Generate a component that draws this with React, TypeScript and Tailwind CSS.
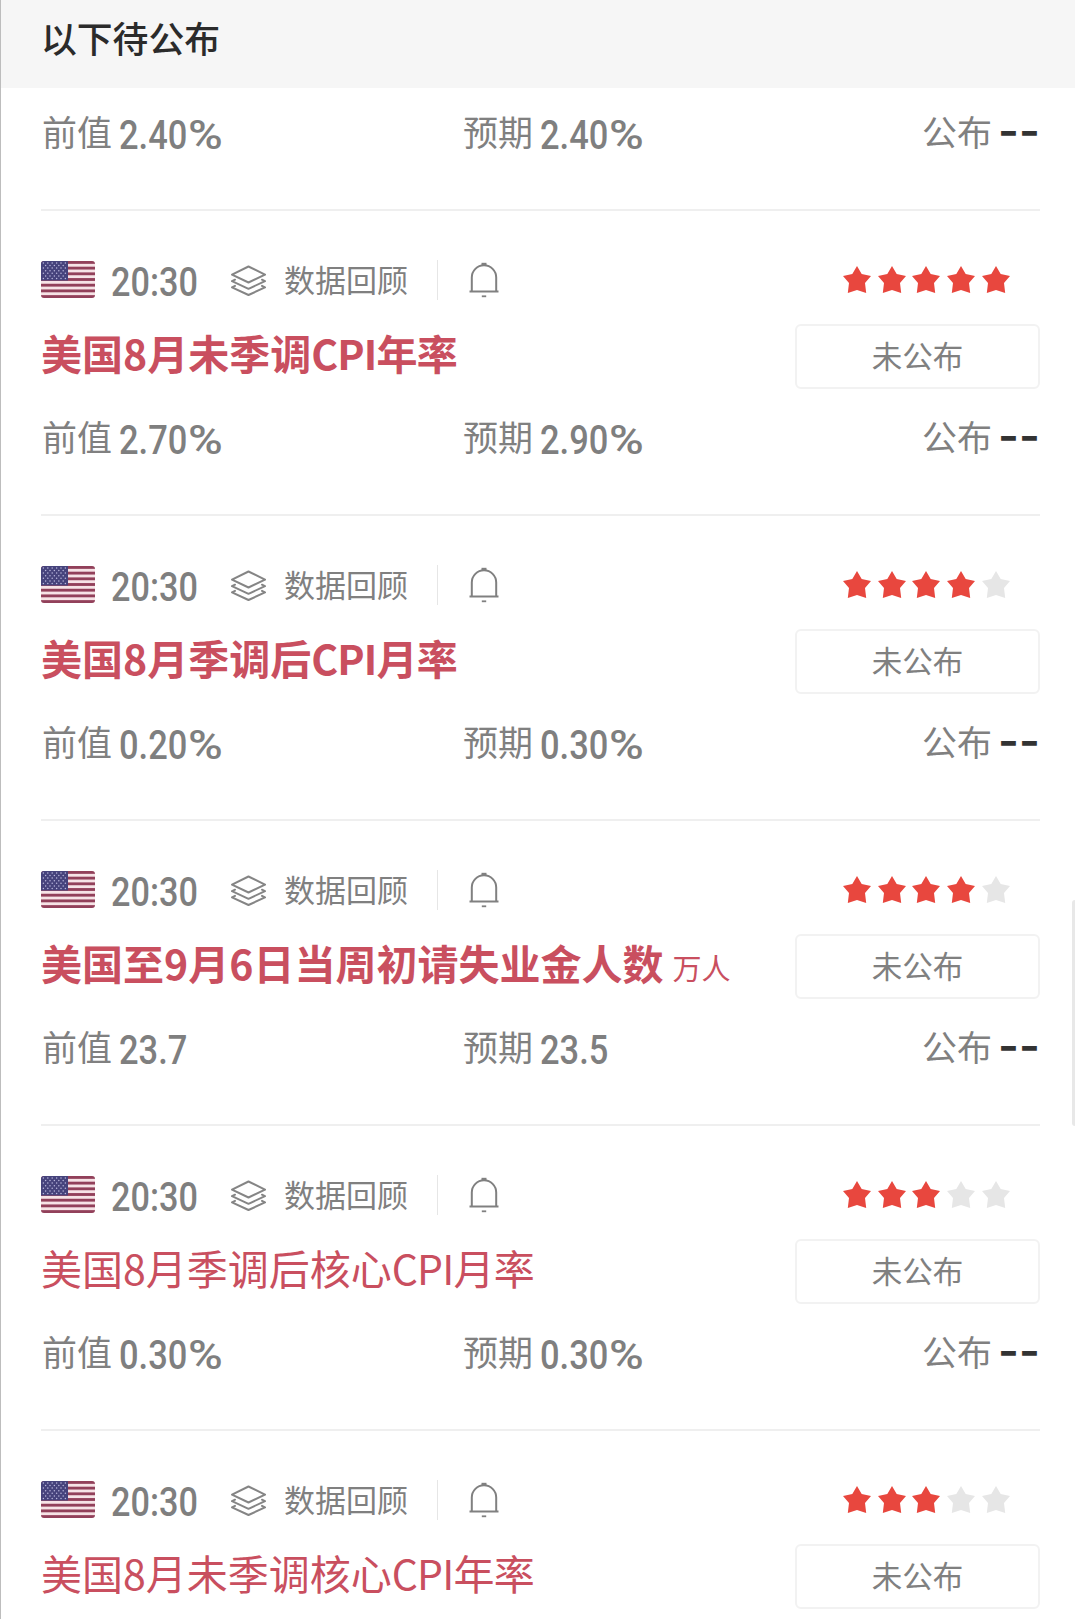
import React from 'react';
import clsx from 'clsx';

interface CalendarEvent {
  id: number;
  time: string;
  title: string;
  unit?: string;
  stars: number;
  previous?: string;
  forecast?: string;
}

const EVENTS: CalendarEvent[] = [
  { id: 1, time: '20:30', title: '美国8月未季调CPI年率', stars: 5, previous: '2.70%', forecast: '2.90%' },
  { id: 2, time: '20:30', title: '美国8月季调后CPI月率', stars: 4, previous: '0.20%', forecast: '0.30%' },
  { id: 3, time: '20:30', title: '美国至9月6日当周初请失业金人数', unit: '万人', stars: 4, previous: '23.7', forecast: '23.5' },
  { id: 4, time: '20:30', title: '美国8月季调后核心CPI月率', stars: 3, previous: '0.30%', forecast: '0.30%' },
  { id: 5, time: '20:30', title: '美国8月未季调核心CPI年率', stars: 3 },
];

const UsFlag = () => (
  <svg viewBox="0 0 54 37" className="h-[37px] w-[54px] shrink-0 rounded-[3px]">
    <rect width="54" height="37" fill="#f6e3e6" />
    {[0, 1, 2, 3, 4, 5, 6].map((i) => (
      <rect key={i} y={i * 5.69} width="54" height="2.85" fill="#92405a" />
    ))}
    <rect width="27" height="19.5" fill="#46437c" />
    {Array.from({ length: 7 }).map((_, row) =>
      Array.from({ length: row % 2 ? 5 : 6 }).map((_, col) => (
        <circle
          key={`${row}-${col}`}
          cx={2.4 + col * 4.4 + (row % 2 ? 2.2 : 0)}
          cy={1.9 + row * 2.6}
          r="0.75"
          fill="#b9b6dc"
        />
      ))
    )}
  </svg>
);

const LayersIcon = () => (
  <svg
    viewBox="0 0 38 32"
    className="h-8 w-[38px] shrink-0"
    fill="none"
    stroke="#858585"
    strokeWidth="2"
    strokeLinejoin="round"
    strokeLinecap="round"
  >
    <path d="M19.500 2.500 36 10.700 19.500 18.500 3 10.700Z" />
    <path d="M6 15.700 3 17.200 19.500 24.800 36 17.200 33 15.700" />
    <path d="M6 21.900 3 23.400 19.500 31 36 23.400 33 21.900" />
  </svg>
);

const BellIcon = () => (
  <svg viewBox="0 0 30 36" className="h-9 w-[30px] shrink-0" fill="none" stroke="#808080" strokeWidth="2">
    <path d="M2.800 29V15.500a12.200 12.200 0 0 1 24.400 0V29" />
    <path d="M0.500 29.500h29" />
    <path d="M12.500 2.300h5" strokeWidth="3" />
    <path d="M12.800 34.300h4.400" strokeWidth="1.800" />
  </svg>
);

const Star = ({ active }: { active: boolean }) => (
  <svg viewBox="0 0 28 27" className={clsx('h-[27px] w-7', active ? 'fill-[#e8473e]' : 'fill-[#e6e6e6]')}>
    <path d="M14 0 18.700 8.100 28 10 22 17 23.200 27 14 24 4.800 27 6 17 0 10 9.300 8.100Z" />
  </svg>
);

const Figure = ({ value = '' }: { value?: string }) => {
  const isPercent = value.endsWith('%');

  return (
    <span className="flex font-['Roboto',sans-serif] text-[41.500px] leading-[48px] font-medium text-[#7f7f7f]">
      <span className="origin-left scale-x-[0.83]">{isPercent ? value.slice(0, -1) : value}</span>
      {isPercent && <span className="-ml-[13px] origin-left scale-x-[1.14]">%</span>}
    </span>
  );
};

const ValuesRow = ({ previous, forecast }: { previous?: string; forecast?: string }) => (
  <div className="flex h-12 items-center whitespace-nowrap pb-0.5 text-[35px] leading-[48px] text-[#808080]">
    <div className="flex w-[421px] items-center gap-[7px] pl-px">
      <span>前值</span>
      <span className="pt-[7px]"><Figure value={previous} /></span>
    </div>
    <div className="flex items-center gap-[7px] pl-px">
      <span>预期</span>
      <span className="pt-[7px]"><Figure value={forecast} /></span>
    </div>
    <div className="ml-auto flex items-center gap-1.5">
      <span>公布</span>
      <span className="font-['Inter',sans-serif] text-[45px] font-semibold text-[#333]">--</span>
    </div>
  </div>
);

const EventTitle = ({ title, bold }: { title: string; bold: boolean }) => {
  const split = title.indexOf('CPI');
  const head = split < 0 ? title : title.slice(0, split);
  const tail = split < 0 ? '' : title.slice(split);

  return (
    <span className={clsx('text-[41px] leading-[60px]', bold && 'font-bold')}>
      {head}
      <span className="tracking-[-0.8px]">{tail}</span>
    </span>
  );
};

const EventItem = ({ event }: { event: CalendarEvent }) => (
  <div className="mr-[35px] ml-[41px] h-[305px] border-b-2 border-[#efefef] pt-[50px]">
    <div className="flex h-[37px] items-center whitespace-nowrap">
      <UsFlag />
      <div className="ml-4 w-[118px] pt-[5px]">
        <span className="inline-block origin-left scale-x-[0.825] font-['Roboto',sans-serif] text-[41.500px] leading-[48px] font-medium text-[#7f7f7f]">
          {event.time}
        </span>
      </div>
      <LayersIcon />
      <span className="ml-[17px] pb-0.5 text-[31px] leading-[37px] text-[#808080]">数据回顾</span>
      <div className="ml-[29px] h-10 w-px bg-[#e6e6e6]" />
      <div className="ml-[31px]">
        <BellIcon />
      </div>
      <div className="mr-[30px] ml-auto flex gap-[6.8px]">
        {[1, 2, 3, 4, 5].map((n) => (
          <Star key={n} active={n <= event.stars} />
        ))}
      </div>
    </div>

    <div className="mt-[26px] flex h-[65px] items-center justify-between whitespace-nowrap">
      <div className="flex items-baseline pb-2.5 text-[#c94f5f]">
        <EventTitle title={event.title} bold={event.stars > 3} />
        {event.unit && <span className="ml-[9px] text-[29px]">{event.unit}</span>}
      </div>
      <div className="flex h-[65px] w-[245px] items-center justify-center rounded-md border-2 border-[#f2f2f2] pb-0.5 text-[30.500px] text-[#808080]">
        未公布
      </div>
    </div>

    {event.previous && (
      <div className="mt-6">
        <ValuesRow previous={event.previous} forecast={event.forecast} />
      </div>
    )}
  </div>
);

const App = () => {
  return (
    <div className="relative h-[1619px] w-[1075px] overflow-hidden bg-white font-['Noto_Sans_CJK_SC',sans-serif]">
      <header className="flex h-[88px] items-center bg-[#f6f6f6] pb-3 pl-[41px] text-[35.800px] font-medium text-[#2b2b2b]">
        以下待公布
      </header>

      <div className="mr-[35px] ml-[41px] h-[123px] border-b-2 border-[#efefef] pt-5">
        <ValuesRow previous="2.40%" forecast="2.40%" />
      </div>

      {EVENTS.map((event) => (
        <EventItem key={event.id} event={event} />
      ))}

      <div className="absolute inset-y-0 left-0 w-px bg-[#bdbdbd]" />
      <div className="absolute top-[900px] right-0 h-[226px] w-[3px] rounded-l-full bg-[#e8e8e8]" />
    </div>
  );
};

export default App;
